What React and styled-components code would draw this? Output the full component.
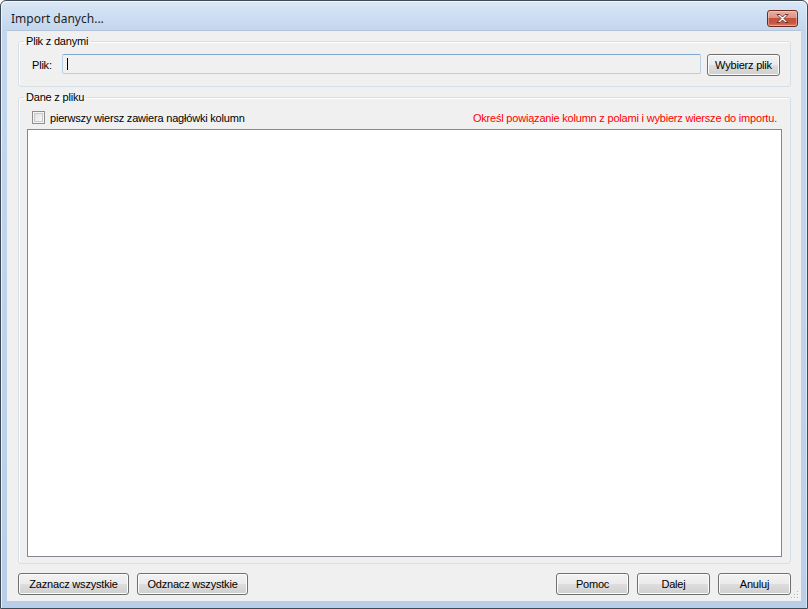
import styled, { createGlobalStyle } from "styled-components";

const GlobalStyle = createGlobalStyle`
  html, body {
    margin: 0;
    padding: 0;
    background: #ffffff;
  }
  body {
    font-family: "Liberation Sans", Arial, sans-serif;
    font-size: 11px;
    letter-spacing: -0.2px;
    color: #000;
  }
`;

const CloseIcon = () => (
  <svg width="15" height="11" viewBox="0 0 15 11">
    <path
      d="M2 1.5h3l2.5 2.5 2.5-2.5h3l-4 4 4 4h-3l-2.5-2.5-2.5 2.5h-3l4-4z"
      fill="#ffffff"
      stroke="#5a2a22"
      strokeWidth="0.9"
      strokeLinejoin="round"
    />
  </svg>
);

const SizeGrip = () => (
  <svg width="10" height="10" viewBox="0 0 10 10">
    {[
      [8, 2],
      [8, 5],
      [5, 5],
      [8, 8],
      [5, 8],
      [2, 8],
    ].map(([x, y]) => (
      <g key={`${x}-${y}`}>
        <rect x={x} y={y} width="1" height="1" fill="#ffffff" />
        <rect x={x - 1} y={y - 1} width="1" height="1" fill="#b4b8bf" />
      </g>
    ))}
  </svg>
);

const App = () => {
  return (
    <>
      <GlobalStyle />
      <Window>
        <TitleBar>
          <Title>Import danych...</Title>
          <CloseButton>
            <CloseIcon />
          </CloseButton>
        </TitleBar>
        <Client>
          <FileGroup>
            <Legend $shift={-8}>Plik z danymi</Legend>
            <FileRow>
              <FieldLabel>Plik:</FieldLabel>
              <TextBox>
                <Caret />
              </TextBox>
              <Button $width={73} $gap={6}>
                Wybierz plik
              </Button>
            </FileRow>
          </FileGroup>
          <DataGroup>
            <Legend $shift={-3}>Dane z pliku</Legend>
            <OptionsRow>
              <CheckLabel>
                <CheckBox />
                pierwszy wiersz zawiera nagłówki kolumn
              </CheckLabel>
              <Hint>Określ powiązanie kolumn z polami i wybierz wiersze do importu.</Hint>
            </OptionsRow>
            <ListArea />
          </DataGroup>
          <ButtonBar>
            <ButtonGroup>
              <Button $width={111}>Zaznacz wszystkie</Button>
              <Button $width={111}>Odznacz wszystkie</Button>
            </ButtonGroup>
            <ButtonGroup>
              <Button $width={73}>Pomoc</Button>
              <Button $width={73}>Dalej</Button>
              <Button $width={73}>Anuluj</Button>
            </ButtonGroup>
          </ButtonBar>
          <Grip>
            <SizeGrip />
          </Grip>
        </Client>
      </Window>
    </>
  );
};
export default App;

const Window = styled.div`
  width: 808px;
  height: 609px;
  box-sizing: border-box;
  border: 1px solid #3f4a57;
  border-radius: 6px 6px 0 0;
  background: linear-gradient(
    to bottom,
    #dbe7f5 0px,
    #cddff2 14px,
    #c3d6ed 29px,
    #bfd3eb 300px,
    #b9cfe9 100%
  );
  display: flex;
  flex-direction: column;
  padding: 0 6px 7px 6px;
  box-shadow: inset 1px 1px 0 rgba(255, 255, 255, 0.7),
    inset -1px 0 0 rgba(255, 255, 255, 0.5);
`;

const TitleBar = styled.div`
  height: 29px;
  display: flex;
  justify-content: space-between;
  align-items: flex-start;
  padding: 0 3px 0 4px;
`;

const Title = styled.div`
  font-family: "Noto Sans", "Liberation Sans", sans-serif;
  font-size: 12px;
  letter-spacing: 0;
  line-height: 16px;
  padding-top: 10px;
  color: #1e1e1e;
`;

const CloseButton = styled.div`
  margin-top: 9px;
  width: 31px;
  height: 17px;
  box-sizing: border-box;
  border: 1px solid #6e2a20;
  border-radius: 3px;
  background: linear-gradient(
    to bottom,
    #e8aea2 0%,
    #dc9384 45%,
    #c5513d 50%,
    #c8553f 80%,
    #d8836b 100%
  );
  box-shadow: inset 0 0 0 1px rgba(255, 220, 210, 0.45);
  display: flex;
  align-items: center;
  justify-content: center;
`;

const Client = styled.div`
  position: relative;
  flex: 1;
  background: #f0f0f0;
  border-top: 1px solid #b4c4d8;
  display: flex;
  flex-direction: column;
  padding: 4px 10px 0 11px;
`;

const GroupBox = styled.fieldset`
  margin: 0;
  min-width: 0;
  border: 1px solid #d5dfe5;
  border-radius: 3px;
  box-shadow: inset 1px 1px 0 #ffffff;
`;

const FileGroup = styled(GroupBox)`
  padding: 6px 10px 10px 13px;
`;

const DataGroup = styled(GroupBox)`
  margin-top: 4px;
  padding: 1px 8px 6px 8px;
`;

const Legend = styled.legend`
  padding: 0 2px;
  margin-left: ${(p) => p.$shift}px;
  font-size: 11px;
  line-height: 13px;
  color: #000;
`;

const FileRow = styled.div`
  display: flex;
  align-items: center;
  height: 22px;
`;

const FieldLabel = styled.span`
  width: 30px;
  flex: none;
`;

const TextBox = styled.div`
  flex: 1;
  height: 20px;
  box-sizing: border-box;
  margin-top: -2px;
  border: 1px solid #b7cfe6;
  border-top-color: #7ea6cd;
  border-radius: 2px;
  background: #f0f0f0;
  display: flex;
  align-items: center;
  padding-left: 4px;
`;

const Caret = styled.span`
  width: 1px;
  height: 12px;
  background: #000;
`;

const Button = styled.button`
  width: ${(p) => p.$width}px;
  height: 22px;
  flex: none;
  box-sizing: border-box;
  margin-left: ${(p) => p.$gap || 0}px;
  padding: 0;
  border: 1px solid #707070;
  border-radius: 3px;
  background: linear-gradient(
    to bottom,
    #f2f2f2 0%,
    #ebebeb 48%,
    #dddddd 52%,
    #cfcfcf 100%
  );
  box-shadow: inset 0 0 0 1px #fcfcfc;
  font-family: "Liberation Sans", Arial, sans-serif;
  font-size: 11px;
  letter-spacing: -0.2px;
  color: #000;
`;

const OptionsRow = styled.div`
  display: flex;
  justify-content: space-between;
  align-items: center;
  height: 17px;
  margin-top: 4px;
  padding: 0 5px 0 5px;
`;

const CheckLabel = styled.label`
  display: flex;
  align-items: center;
  gap: 5px;
`;

const CheckBox = styled.span`
  width: 13px;
  height: 13px;
  box-sizing: border-box;
  border: 1px solid #8e8f8f;
  background: linear-gradient(135deg, #dcdcdc 0%, #f0f0f0 60%, #fbfbfb 100%);
  box-shadow: inset 0 0 0 1px #f4f4f4, inset 0 0 0 2px #c9c9c9;
`;

const Hint = styled.span`
  color: #ff0000;
`;

const ListArea = styled.div`
  margin-top: 3px;
  height: 428px;
  box-sizing: border-box;
  border: 1px solid #828790;
  background: #ffffff;
`;

const ButtonBar = styled.div`
  display: flex;
  justify-content: space-between;
  margin-top: 9px;
`;

const ButtonGroup = styled.div`
  display: flex;
  gap: 8px;
`;

const Grip = styled.div`
  position: absolute;
  right: 1px;
  bottom: 1px;
  width: 10px;
  height: 10px;
  line-height: 0;
`;
